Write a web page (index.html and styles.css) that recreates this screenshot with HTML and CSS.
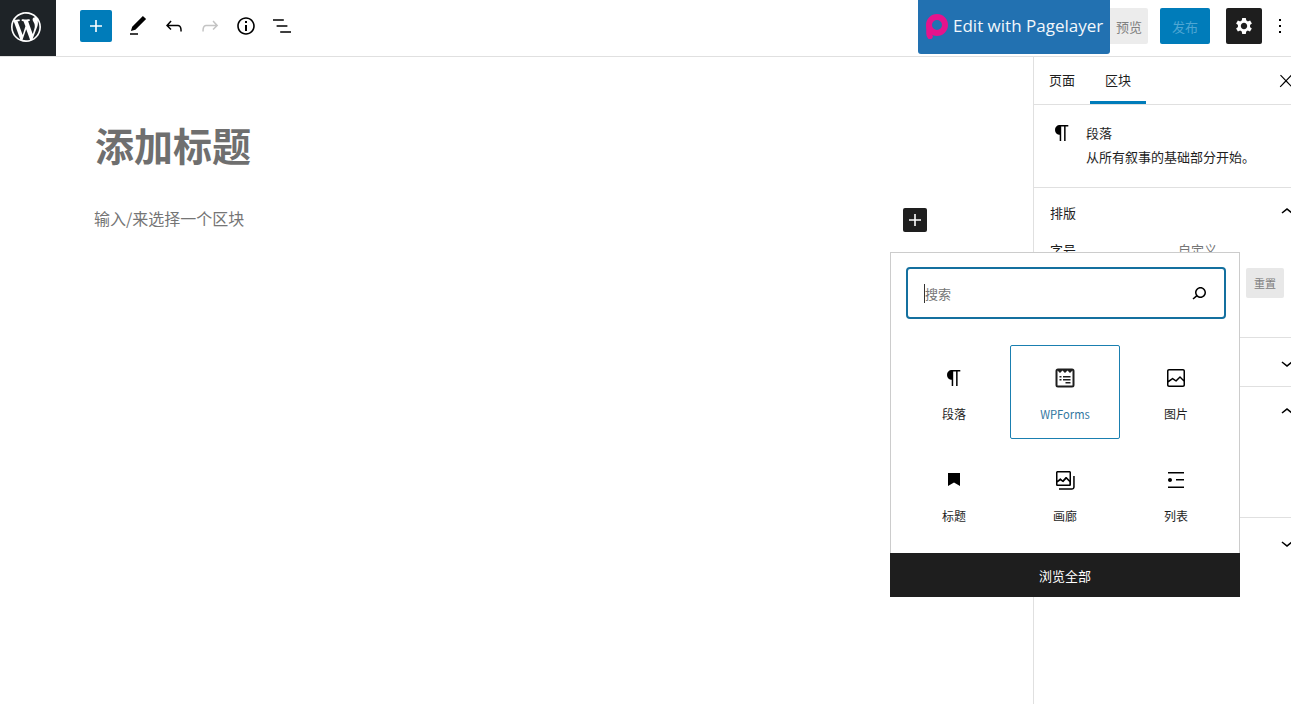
FILE: index.html
```html
<!DOCTYPE html>
<html lang="zh-CN">
<head>
  <meta charset="UTF-8">
  <meta name="viewport" content="width=device-width, initial-scale=1.0">
  <title>添加新页面</title>
  <link rel="stylesheet" href="styles.css">
</head>
<body>
  <div class="editor">
    <header class="topbar">
      <a class="wp-logo" href="#">
        <svg width="36" height="36" viewBox="-2 -2 24 24" fill="#fff"><path d="M20 10c0-5.51-4.49-10-10-10C4.48 0 0 4.49 0 10c0 5.52 4.48 10 10 10 5.51 0 10-4.48 10-10zM7.78 15.37L4.37 6.22c.55-.02 1.17-.08 1.17-.08.5-.06.44-1.13-.06-1.11 0 0-1.45.11-2.37.11-.18 0-.37 0-.58-.01C4.12 2.69 6.87 1.11 10 1.11c2.33 0 4.45.87 6.05 2.34-.68-.11-1.65.39-1.65 1.58 0 .74.45 1.36.9 2.1.35.61.55 1.36.55 2.46 0 1.49-1.4 5-1.4 5l-3.03-8.37c.54-.02.82-.17.82-.17.5-.05.44-1.25-.06-1.22 0 0-1.44.12-2.38.12-.87 0-2.33-.12-2.33-.12-.5-.03-.56 1.2-.06 1.22l.92.08 1.26 3.41zM17.41 10c.24-.64.74-1.87.43-4.25.7 1.29 1.05 2.71 1.05 4.25 0 3.29-1.73 6.24-4.4 7.78.97-2.59 1.94-5.2 2.92-7.78zM6.1 18.09C3.12 16.65 1.11 13.53 1.11 10c0-1.3.23-2.48.72-3.59C3.25 10.3 4.67 14.2 6.1 18.09zm4.03-6.63l2.58 6.98c-.86.29-1.76.45-2.71.45-.79 0-1.57-.11-2.29-.33.81-2.38 1.62-4.74 2.42-7.1z"/></svg>
      </a>
      <div class="tools">
        <button class="add-btn">
          <svg width="24" height="24" viewBox="0 0 24 24" fill="#fff"><path d="M18 11.2h-5.2V6h-1.6v5.2H6v1.6h5.2V18h1.6v-5.2H18z"/></svg>
        </button>
        <button class="tool">
          <svg width="24" height="24" viewBox="0 0 24 24"><path d="M20.1 5.1L16.9 2 6.2 12.7l-1.3 4.4 4.5-1.3L20.1 5.1zM4 20.8h8v-1.5H4v1.5z"/></svg>
        </button>
        <button class="tool">
          <svg width="24" height="24" viewBox="0 0 24 24"><path d="M18.3 11.7c-.6-.6-1.4-.9-2.3-.9H6.7l2.9-3.3-1.1-1-4.5 5L8.5 16l1-1-2.7-2.7H16c.5 0 .9.2 1.3.5 1 1 1 3.4 1 4.5v.3h1.5v-.2c0-1.5 0-4.3-1.5-5.7z"/></svg>
        </button>
        <button class="tool disabled">
          <svg width="24" height="24" viewBox="0 0 24 24"><path d="M15.6 6.5l-1.1 1 2.9 3.3H8c-.9 0-1.7.3-2.3.9-1.4 1.5-1.4 4.2-1.4 5.6v.2h1.5v-.3c0-1.1 0-3.5 1-4.5.3-.3.7-.5 1.3-.5h9.2L14.5 15l1.1 1.1 4.6-4.6-4.6-5z"/></svg>
        </button>
        <button class="tool">
          <svg width="24" height="24" viewBox="0 0 24 24"><path d="M12 3.2c-4.8 0-8.8 3.9-8.8 8.8 0 4.8 3.9 8.8 8.8 8.8 4.8 0 8.8-3.9 8.8-8.8 0-4.8-4-8.8-8.8-8.8zm0 16c-4 0-7.2-3.3-7.2-7.2C4.8 8 8 4.8 12 4.8s7.2 3.3 7.2 7.2c0 4-3.2 7.2-7.2 7.2zM11 17h2v-6h-2v6zm0-8h2V7h-2v2z"/></svg>
        </button>
        <button class="tool">
          <svg width="24" height="24" viewBox="0 0 24 24"><path d="M13.8 5.2H3v1.5h10.8V5.2zm-3.6 12v1.5H21v-1.5H10.2zm7.2-6H6.6v1.5h10.8v-1.5z"/></svg>
        </button>
      </div>
      <div class="actions">
        <button class="preview-btn">预览</button>
        <button class="publish-btn">发布</button>
        <button class="settings-btn">
          <svg width="24" height="24" viewBox="0 0 24 24" fill="#fff"><path fill-rule="evenodd" d="M18 12.9c0-.3.1-.6.1-.9s0-.6-.1-.9l1.9-1.5-1.8-3.1-2.3.9c-.5-.4-1-.7-1.5-.9L13.8 4h-3.6L9.8 6.5c-.6.2-1.1.5-1.6.9l-2.3-.9-1.8 3.1 1.9 1.5c0 .3-.1.6-.1.9s0 .6.1.9l-1.9 1.5 1.8 3.1 2.3-.9c.5.4 1 .7 1.6.9l.4 2.5h3.6l.4-2.5c.6-.2 1.1-.5 1.5-.9l2.3.9 1.8-3.1-1.9-1.5zM12 15.2c-1.8 0-3.2-1.4-3.2-3.2s1.4-3.2 3.2-3.2 3.2 1.4 3.2 3.2-1.4 3.2-3.2 3.2z"/></svg>
        </button>
        <button class="more-btn">
          <svg width="24" height="24" viewBox="0 0 24 24"><path d="M13 19h-2v-2h2v2zm0-6h-2v-2h2v2zm0-6h-2V5h2v2z"/></svg>
        </button>
      </div>
      <a class="pagelayer-btn" href="#">
        <svg width="24" height="26" viewBox="0 0 24 26" fill="none" stroke="#e5148c"><circle cx="12" cy="12" r="8" stroke-width="6"/><path d="M4 12v8.500c0 1.500.3 2.200 1 3" stroke-width="5.500" stroke-linecap="round"/></svg>
        <span>Edit with Pagelayer</span>
      </a>
    </header>

    <div class="workspace">
      <main class="canvas">
        <h1 class="post-title">添加标题</h1>
        <div class="block-row">
          <p class="block-placeholder">输入/来选择一个区块</p>
          <button class="inline-add">
            <svg width="24" height="24" viewBox="0 0 24 24" fill="#fff"><path d="M18 11.2h-5.2V6h-1.6v5.2H6v1.6h5.2V18h1.6v-5.2H18z"/></svg>
          </button>
        </div>
      </main>

      <aside class="sidebar">
        <div class="tabs">
          <button class="tab">页面</button>
          <button class="tab active">区块</button>
          <button class="close-btn">
            <svg width="20" height="20" viewBox="0 0 24 24"><path d="M13 11.8l6.1-6.3-1-1-6.1 6.2-6.1-6.2-1 1 6.1 6.3-6.5 6.7 1 1 6.5-6.6 6.5 6.6 1-1z"/></svg>
          </button>
        </div>
        <div class="block-card">
          <svg width="24" height="24" viewBox="0 0 24 24"><path d="M18.3 4H9.900v-.1l-.9.2c-2.300.4-4 2.400-4 4.800s1.700 4.400 4 4.800l.7.1V20h1.500V5.500h2.900V20h1.500V5.500h2.700V4z"/></svg>
          <div>
            <div class="block-card-title">段落</div>
            <div class="block-card-desc">从所有叙事的基础部分开始。</div>
          </div>
        </div>
        <section class="panel panel-type">
          <div class="panel-head">
            <span>排版</span>
            <svg width="24" height="24" viewBox="0 0 24 24"><path d="M6.500 12.400L12 8l5.500 4.400-.9 1.200L12 10l-4.500 3.600-1-1.200z"/></svg>
          </div>
          <div class="size-row">
            <span>字号</span>
            <span class="size-custom">自定义</span>
          </div>
          <div class="reset-row">
            <button class="reset-btn">重置</button>
          </div>
        </section>
        <section class="panel panel-closed">
          <div class="panel-head">
            <span></span>
            <svg width="24" height="24" viewBox="0 0 24 24"><path d="M17.500 11.600L12 16l-5.500-4.400.9-1.200L12 14l4.500-3.600 1 1.200z"/></svg>
          </div>
        </section>
        <section class="panel panel-open">
          <div class="panel-head">
            <span></span>
            <svg width="24" height="24" viewBox="0 0 24 24"><path d="M6.500 12.400L12 8l5.500 4.400-.9 1.200L12 10l-4.500 3.600-1-1.200z"/></svg>
          </div>
        </section>
        <section class="panel panel-last">
          <div class="panel-head">
            <span></span>
            <svg width="24" height="24" viewBox="0 0 24 24"><path d="M17.500 11.600L12 16l-5.500-4.400.9-1.200L12 14l4.500-3.600 1 1.200z"/></svg>
          </div>
        </section>
      </aside>

      <div class="inserter">
        <div class="search-wrap">
          <div class="search-box">
            <span class="search-text">搜索</span>
            <svg width="24" height="24" viewBox="0 0 24 24"><path d="M13.500 6C10.500 6 8 8.500 8 11.500c0 1.100.3 2.100.9 3l-3.400 3 1 1.100 3.400-2.900c1 .9 2.200 1.400 3.600 1.400 3 0 5.500-2.500 5.500-5.500C19 8.500 16.500 6 13.500 6zm0 9.500c-2.200 0-4-1.800-4-4s1.800-4 4-4 4 1.800 4 4-1.800 4-4 4z"/></svg>
          </div>
        </div>
        <div class="block-grid">
          <div class="block-item">
            <svg width="24" height="24" viewBox="0 0 24 24"><path d="M18.300 4H9.900v-.1l-.9.200c-2.300.4-4 2.400-4 4.800s1.700 4.400 4 4.800l.7.100V20h1.500V5.500h2.900V20h1.500V5.500h2.700V4z"/></svg>
            <span>段落</span>
          </div>
          <div class="block-item selected">
            <svg width="24" height="24" viewBox="0 0 24 24"><path fill-rule="evenodd" d="M5 2.500h14A2.500 2.500 0 0 1 21.500 5v14a2.500 2.500 0 0 1-2.500 2.500H5A2.500 2.500 0 0 1 2.500 19V5A2.500 2.500 0 0 1 5 2.500zM4.500 4.500v15h15v-15l-2.500 2.500-2.500-2.500-2.500 2.500-2.500-2.500-2.500 2.500z"/><path d="M6.500 10h2v1.500h-2zM10 10h7.500v1.500H10zM6.500 13h2v1.500h-2zM10 13h7.500v1.500H10zM12.500 16h5v1.500h-5z"/></svg>
            <span>WPForms</span>
          </div>
          <div class="block-item">
            <svg width="24" height="24" viewBox="0 0 24 24"><path d="M19 3H5c-1.100 0-2 .9-2 2v14c0 1.100.9 2 2 2h14c1.100 0 2-.9 2-2V5c0-1.100-.9-2-2-2zM5 4.500h14c.3 0 .5.200.5.500v8.400l-3-2.900c-.3-.3-.8-.3-1 0L11.900 14 9 12c-.3-.2-.6-.2-.8 0l-3.700 2.600V5c0-.3.200-.5.500-.5zm14 15H5c-.3 0-.5-.2-.5-.5v-2.400l4.100-3 3 1.900c.3.200.7.200.9-.1L16 12l3.500 3.400V19c0 .3-.2.500-.5.500z"/></svg>
            <span>图片</span>
          </div>
          <div class="block-item">
            <svg width="24" height="24" viewBox="0 0 24 24"><path d="M6 5h12v13l-6-3.500L6 18z"/></svg>
            <span>标题</span>
          </div>
          <div class="block-item">
            <svg width="24" height="24" viewBox="0 0 24 24"><path fill-rule="evenodd" d="M20.200 8v11c0 .7-.6 1.300-1.300 1.300H6v1.500h12.900c1.500 0 2.800-1.200 2.800-2.800V8zM18 16.400V4.600c0-.9-.7-1.600-1.600-1.600H4.600C3.700 3 3 3.700 3 4.600v11.800c0 .9.700 1.600 1.600 1.600h11.800c.9 0 1.600-.7 1.600-1.600zM4.500 4.600c0-.1 0-.1.100-.1h11.800c.1 0 .1 0 .1.100V12l-2.900-2.900c-.3-.3-.8-.3-1 0l-2.900 3.100-2-1.700c-.3-.2-.6-.2-.8 0l-2.400 2V4.600zm0 11.800v-1.800l2.900-2.200 2.200 1.700c.3.200.7.200.9-.1l2.800-3 3 3v2.400c0 .1 0 .1-.1.100H4.600c-.1 0-.1 0-.1-.1z"/></svg>
            <span>画廊</span>
          </div>
          <div class="block-item">
            <svg width="24" height="24" viewBox="0 0 24 24"><path d="M4 4v1.500h16V4H4zm8 8.500h8V11h-8v1.500zM4 20h16v-1.500H4V20zm4-8c0-1.100-.9-2-2-2s-2 .9-2 2 .9 2 2 2 2-.9 2-2z"/></svg>
            <span>列表</span>
          </div>
        </div>
        <button class="browse-all">浏览全部</button>
      </div>
    </div>
  </div>
</body>
</html>
```

FILE: styles.css
```css
* {
  box-sizing: border-box;
}

body {
  margin: 0;
  font-family: "Noto Sans CJK SC", "Noto Sans", sans-serif;
  font-size: 13px;
  color: #1e1e1e;
  background: #fff;
}

button {
  border: 0;
  padding: 0;
  background: none;
  font: inherit;
  color: inherit;
  cursor: pointer;
}

svg {
  display: block;
}

.editor {
  display: flex;
  flex-direction: column;
  height: 100vh;
  overflow: hidden;
}

/* top bar */
.topbar {
  position: relative;
  display: flex;
  align-items: center;
  flex: none;
  height: 57px;
  padding-bottom: 4px;
  border-bottom: 1px solid #e0e0e0;
}

.wp-logo {
  display: flex;
  align-items: center;
  justify-content: center;
  align-self: flex-start;
  width: 56px;
  height: 56px;
  padding: 0 4px 2px 0;
  background: #1e2327;
}

.tools {
  display: flex;
  align-items: center;
  margin-left: 24px;
}

.add-btn {
  display: flex;
  align-items: center;
  justify-content: center;
  width: 32px;
  height: 32px;
  margin-right: 8px;
  border-radius: 2px;
  background: #007cba;
}

.tool {
  display: flex;
  align-items: center;
  justify-content: center;
  width: 36px;
  height: 36px;
}

.tool.disabled svg {
  fill: #c4c4c4;
}

.actions {
  display: flex;
  align-items: center;
  margin-left: auto;
  margin-right: -1px;
}

.preview-btn {
  width: 44px;
  height: 36px;
  margin-right: 12px;
  padding-left: 6px;
  border-radius: 2px;
  background: #ececec;
  color: #808080;
}

.publish-btn {
  width: 50px;
  height: 36px;
  margin-right: 16px;
  border-radius: 2px;
  background: #007cba;
  color: #4ea6d3;
}

.settings-btn {
  display: flex;
  align-items: center;
  justify-content: center;
  width: 36px;
  height: 36px;
  margin-right: 6px;
  border-radius: 2px;
  background: #1e1e1e;
}

.more-btn {
  width: 24px;
  height: 36px;
}

.pagelayer-btn {
  position: absolute;
  top: 0;
  left: 918px;
  display: flex;
  align-items: center;
  gap: 4px;
  width: 192px;
  height: 54px;
  padding: 0 0 2px 7px;
  border-radius: 0 0 3px 3px;
  background: #2271b1;
  color: #f2f7fb;
  font-family: "Open Sans", sans-serif;
  font-size: 17px;
  text-decoration: none;
  white-space: nowrap;
}

.pagelayer-btn span {
  margin-top: -2px;
}

/* main area */
.workspace {
  position: relative;
  display: flex;
  flex: 1;
  min-height: 0;
}

.canvas {
  flex: none;
  width: 1033px;
  padding: 59px 106px 0 95px;
}

.post-title {
  margin: 0 0 36px;
  font-size: 39px;
  line-height: 56px;
  font-weight: 700;
  color: #6f6f6f;
}

.block-row {
  display: flex;
  align-items: center;
  justify-content: space-between;
}

.block-placeholder {
  margin: -4px 0 0 -1px;
  font-size: 16px;
  line-height: 24px;
  color: #757575;
}

.inline-add {
  width: 24px;
  height: 24px;
  border-radius: 2px;
  background: #1e1e1e;
}

/* settings sidebar */
.sidebar {
  flex: none;
  width: 258px;
  border-left: 1px solid #e0e0e0;
}

.tabs {
  position: relative;
  display: flex;
  height: 48px;
  border-bottom: 1px solid #e0e0e0;
}

.tab {
  width: 56px;
  height: 47px;
  padding-bottom: 2px;
}

.tab.active {
  box-shadow: inset 0 -3px 0 #007cba;
}

.close-btn {
  position: absolute;
  top: 14px;
  right: -5px;
}

.block-card {
  display: flex;
  gap: 12px;
  height: 83px;
  padding: 16px 16px 0;
  border-bottom: 1px solid #e0e0e0;
}

.block-card-title {
  line-height: 24px;
}

.block-card-desc {
  line-height: 24px;
}

.panel {
  border-bottom: 1px solid #e0e0e0;
  padding: 0 16px;
}

.panel-type {
  height: 150px;
}

.panel-closed {
  height: 49px;
}

.panel-open {
  height: 131px;
}

.panel-last {
  border-bottom: 0;
}

.panel-head {
  display: flex;
  align-items: center;
  justify-content: space-between;
  height: 50px;
  padding-bottom: 2px;
  margin-right: -24px;
}

.panel-closed .panel-head {
  height: 48px;
  padding: 2px 0 0;
}

.panel-open .panel-head,
.panel-last .panel-head {
  padding: 0;
}

.size-row {
  display: flex;
  height: 24px;
  line-height: 24px;
}

.size-custom {
  margin-left: 102px;
  color: #757575;
}

.reset-row {
  display: flex;
  justify-content: flex-end;
  margin: 6px -9px 0 0;
}

.reset-btn {
  width: 38px;
  height: 30px;
  border-radius: 2px;
  background: #e8e8e8;
  color: #808080;
  font-size: 11px;
}

/* block inserter popover */
.inserter {
  position: absolute;
  top: 195px;
  left: 890px;
  width: 350px;
  height: 345px;
  border: 1px solid #ccc;
  background: #fff;
  z-index: 10;
}

.search-wrap {
  padding: 14px 14px 0 15px;
}

.search-box {
  display: flex;
  align-items: center;
  justify-content: space-between;
  width: 320px;
  height: 52px;
  padding: 0 13px 0 16px;
  border: 2px solid #14709f;
  border-radius: 4px;
}

.search-text {
  padding-top: 1px;
  border-left: 1px solid #333;
  line-height: 18px;
  color: #757575;
}

.block-grid {
  display: grid;
  grid-template-columns: repeat(3, 110px);
  grid-auto-rows: 94px;
  gap: 8px 1px;
  padding: 26px 8px 0;
}

.block-item {
  display: flex;
  flex-direction: column;
  align-items: center;
  padding-top: 20px;
  border: 1px solid transparent;
  border-radius: 2px;
  font-size: 12px;
}

.block-item span {
  margin-top: 15px;
  line-height: 18px;
}

.block-item.selected {
  border-color: #1a7fb0;
  color: #33779f;
}

.block-item.selected span {
  font-size: 11.2px;
}

.block-item.selected svg {
  fill: #1e1e1e;
}

.browse-all {
  display: block;
  width: 350px;
  height: 44px;
  margin: 12px -1px 0;
  background: #1e1e1e;
  color: #fff;
}
```
